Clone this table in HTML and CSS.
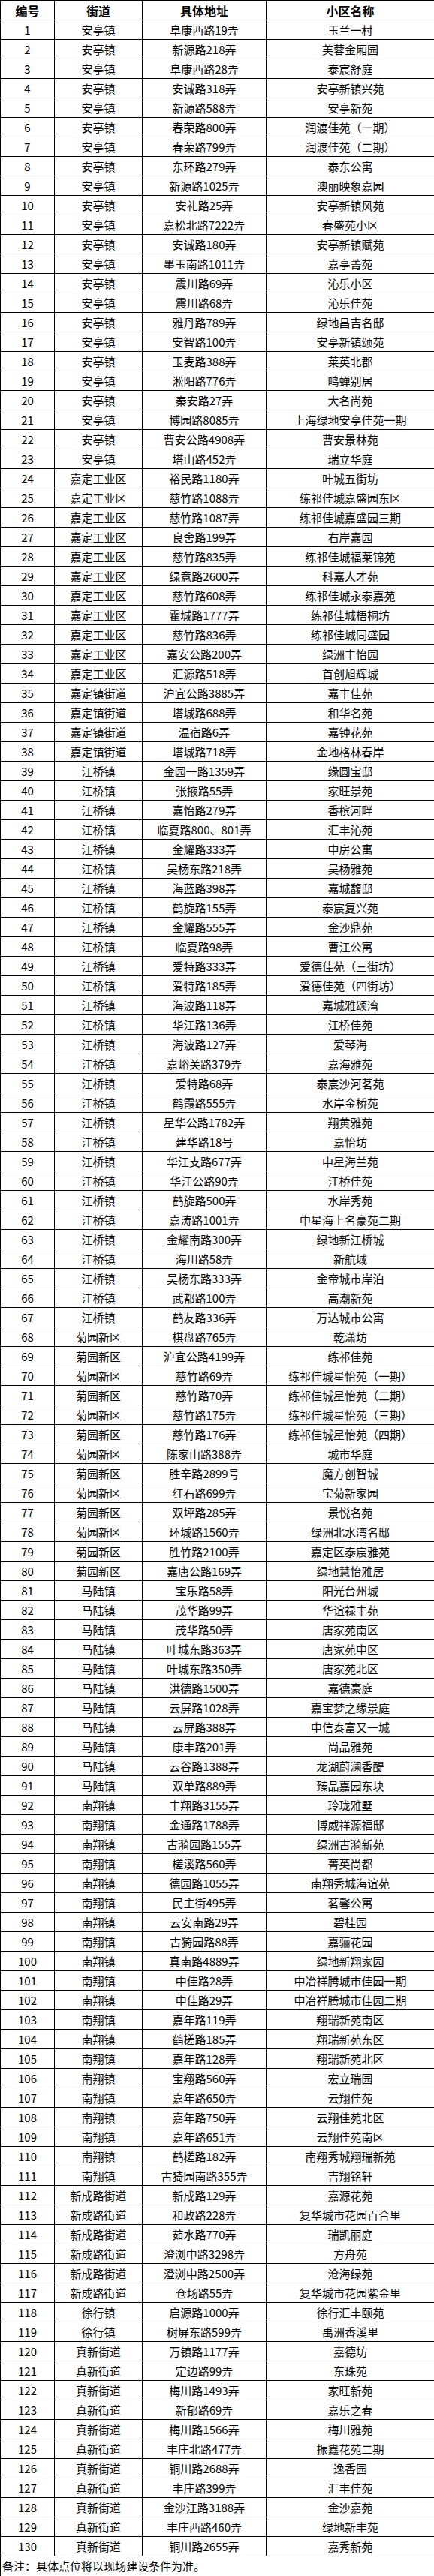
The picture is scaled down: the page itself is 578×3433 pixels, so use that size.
FILE: index.html
```html
<!DOCTYPE html>
<html lang="zh-CN">
<head>
<meta charset="utf-8">
<title>小区名单</title>
<link rel="stylesheet" href="styles.css">
</head>
<body>
<table class="list">
<colgroup><col class="c-no"><col class="c-street"><col class="c-addr"><col class="c-name"></colgroup>
<thead>
<tr class="head"><th>编号</th><th>街道</th><th>具体地址</th><th>小区名称</th></tr>
</thead>
<tbody>
<tr><td>1</td><td>安亭镇</td><td>阜康西路19弄</td><td>玉兰一村</td></tr>
<tr><td>2</td><td>安亭镇</td><td>新源路218弄</td><td>芙蓉金厢园</td></tr>
<tr><td>3</td><td>安亭镇</td><td>阜康西路28弄</td><td>泰宸舒庭</td></tr>
<tr><td>4</td><td>安亭镇</td><td>安诚路318弄</td><td>安亭新镇兴苑</td></tr>
<tr><td>5</td><td>安亭镇</td><td>新源路588弄</td><td>安亭新苑</td></tr>
<tr><td>6</td><td>安亭镇</td><td>春荣路800弄</td><td>润渡佳苑（一期）</td></tr>
<tr><td>7</td><td>安亭镇</td><td>春荣路799弄</td><td>润渡佳苑（二期）</td></tr>
<tr><td>8</td><td>安亭镇</td><td>东环路279弄</td><td>泰东公寓</td></tr>
<tr><td>9</td><td>安亭镇</td><td>新源路1025弄</td><td>澳丽映象嘉园</td></tr>
<tr><td>10</td><td>安亭镇</td><td>安礼路25弄</td><td>安亭新镇风苑</td></tr>
<tr><td>11</td><td>安亭镇</td><td>嘉松北路7222弄</td><td>春盛苑小区</td></tr>
<tr><td>12</td><td>安亭镇</td><td>安诚路180弄</td><td>安亭新镇赋苑</td></tr>
<tr><td>13</td><td>安亭镇</td><td>墨玉南路1011弄</td><td>嘉亭菁苑</td></tr>
<tr><td>14</td><td>安亭镇</td><td>震川路69弄</td><td>沁乐小区</td></tr>
<tr><td>15</td><td>安亭镇</td><td>震川路68弄</td><td>沁乐佳苑</td></tr>
<tr><td>16</td><td>安亭镇</td><td>雅丹路789弄</td><td>绿地昌吉名邸</td></tr>
<tr><td>17</td><td>安亭镇</td><td>安智路100弄</td><td>安亭新镇颂苑</td></tr>
<tr><td>18</td><td>安亭镇</td><td>玉麦路388弄</td><td>莱英北郡</td></tr>
<tr><td>19</td><td>安亭镇</td><td>淞阳路776弄</td><td>鸣蝉别居</td></tr>
<tr><td>20</td><td>安亭镇</td><td>秦安路27弄</td><td>大名尚苑</td></tr>
<tr><td>21</td><td>安亭镇</td><td>博园路8085弄</td><td>上海绿地安亭佳苑一期</td></tr>
<tr><td>22</td><td>安亭镇</td><td>曹安公路4908弄</td><td>曹安景林苑</td></tr>
<tr><td>23</td><td>安亭镇</td><td>塔山路452弄</td><td>瑞立华庭</td></tr>
<tr><td>24</td><td>嘉定工业区</td><td>裕民路1180弄</td><td>叶城五街坊</td></tr>
<tr><td>25</td><td>嘉定工业区</td><td>慈竹路1088弄</td><td>练祁佳城嘉盛园东区</td></tr>
<tr><td>26</td><td>嘉定工业区</td><td>慈竹路1087弄</td><td>练祁佳城嘉盛园三期</td></tr>
<tr><td>27</td><td>嘉定工业区</td><td>良舍路199弄</td><td>右岸嘉园</td></tr>
<tr><td>28</td><td>嘉定工业区</td><td>慈竹路835弄</td><td>练祁佳城福莱锦苑</td></tr>
<tr><td>29</td><td>嘉定工业区</td><td>绿意路2600弄</td><td>科嘉人才苑</td></tr>
<tr><td>30</td><td>嘉定工业区</td><td>慈竹路608弄</td><td>练祁佳城永泰嘉苑</td></tr>
<tr><td>31</td><td>嘉定工业区</td><td>霍城路1777弄</td><td>练祁佳城梧桐坊</td></tr>
<tr><td>32</td><td>嘉定工业区</td><td>慈竹路836弄</td><td>练祁佳城同盛园</td></tr>
<tr><td>33</td><td>嘉定工业区</td><td>嘉安公路200弄</td><td>绿洲丰怡园</td></tr>
<tr><td>34</td><td>嘉定工业区</td><td>汇源路518弄</td><td>首创旭辉城</td></tr>
<tr><td>35</td><td>嘉定镇街道</td><td>沪宜公路3885弄</td><td>嘉丰佳苑</td></tr>
<tr><td>36</td><td>嘉定镇街道</td><td>塔城路688弄</td><td>和华名苑</td></tr>
<tr><td>37</td><td>嘉定镇街道</td><td>温宿路6弄</td><td>嘉钟花苑</td></tr>
<tr><td>38</td><td>嘉定镇街道</td><td>塔城路718弄</td><td>金地格林春岸</td></tr>
<tr><td>39</td><td>江桥镇</td><td>金园一路1359弄</td><td>缘圆宝邸</td></tr>
<tr><td>40</td><td>江桥镇</td><td>张掖路55弄</td><td>家旺景苑</td></tr>
<tr><td>41</td><td>江桥镇</td><td>嘉怡路279弄</td><td>香槟河畔</td></tr>
<tr><td>42</td><td>江桥镇</td><td>临夏路800、801弄</td><td>汇丰沁苑</td></tr>
<tr><td>43</td><td>江桥镇</td><td>金耀路333弄</td><td>中房公寓</td></tr>
<tr><td>44</td><td>江桥镇</td><td>吴杨东路218弄</td><td>吴杨雅苑</td></tr>
<tr><td>45</td><td>江桥镇</td><td>海蓝路398弄</td><td>嘉城馥邸</td></tr>
<tr><td>46</td><td>江桥镇</td><td>鹤旋路155弄</td><td>泰宸复兴苑</td></tr>
<tr><td>47</td><td>江桥镇</td><td>金耀路555弄</td><td>金沙鼎苑</td></tr>
<tr><td>48</td><td>江桥镇</td><td>临夏路98弄</td><td>曹江公寓</td></tr>
<tr><td>49</td><td>江桥镇</td><td>爱特路333弄</td><td>爱德佳苑（三街坊）</td></tr>
<tr><td>50</td><td>江桥镇</td><td>爱特路185弄</td><td>爱德佳苑（四街坊）</td></tr>
<tr><td>51</td><td>江桥镇</td><td>海波路118弄</td><td>嘉城雅颂湾</td></tr>
<tr><td>52</td><td>江桥镇</td><td>华江路136弄</td><td>江桥佳苑</td></tr>
<tr><td>53</td><td>江桥镇</td><td>海波路127弄</td><td>爱琴海</td></tr>
<tr><td>54</td><td>江桥镇</td><td>嘉峪关路379弄</td><td>嘉海雅苑</td></tr>
<tr><td>55</td><td>江桥镇</td><td>爱特路68弄</td><td>泰宸沙河茗苑</td></tr>
<tr><td>56</td><td>江桥镇</td><td>鹤霞路555弄</td><td>水岸金桥苑</td></tr>
<tr><td>57</td><td>江桥镇</td><td>星华公路1782弄</td><td>翔黄雅苑</td></tr>
<tr><td>58</td><td>江桥镇</td><td>建华路18号</td><td>嘉怡坊</td></tr>
<tr><td>59</td><td>江桥镇</td><td>华江支路677弄</td><td>中星海兰苑</td></tr>
<tr><td>60</td><td>江桥镇</td><td>华江公路90弄</td><td>江桥佳苑</td></tr>
<tr><td>61</td><td>江桥镇</td><td>鹤旋路500弄</td><td>水岸秀苑</td></tr>
<tr><td>62</td><td>江桥镇</td><td>嘉涛路1001弄</td><td>中星海上名豪苑二期</td></tr>
<tr><td>63</td><td>江桥镇</td><td>金耀南路300弄</td><td>绿地新江桥城</td></tr>
<tr><td>64</td><td>江桥镇</td><td>海川路58弄</td><td>新航域</td></tr>
<tr><td>65</td><td>江桥镇</td><td>吴杨东路333弄</td><td>金帝城市岸泊</td></tr>
<tr><td>66</td><td>江桥镇</td><td>武都路100弄</td><td>高潮新苑</td></tr>
<tr><td>67</td><td>江桥镇</td><td>鹤友路336弄</td><td>万达城市公寓</td></tr>
<tr><td>68</td><td>菊园新区</td><td>棋盘路765弄</td><td>乾潇坊</td></tr>
<tr><td>69</td><td>菊园新区</td><td>沪宜公路4199弄</td><td>练祁佳苑</td></tr>
<tr><td>70</td><td>菊园新区</td><td>慈竹路69弄</td><td>练祁佳城星怡苑（一期）</td></tr>
<tr><td>71</td><td>菊园新区</td><td>慈竹路70弄</td><td>练祁佳城星怡苑（二期）</td></tr>
<tr><td>72</td><td>菊园新区</td><td>慈竹路175弄</td><td>练祁佳城星怡苑（三期）</td></tr>
<tr><td>73</td><td>菊园新区</td><td>慈竹路176弄</td><td>练祁佳城星怡苑（四期）</td></tr>
<tr><td>74</td><td>菊园新区</td><td>陈家山路388弄</td><td>城市华庭</td></tr>
<tr><td>75</td><td>菊园新区</td><td>胜辛路2899号</td><td>魔方创智城</td></tr>
<tr><td>76</td><td>菊园新区</td><td>红石路699弄</td><td>宝菊新家园</td></tr>
<tr><td>77</td><td>菊园新区</td><td>双坪路285弄</td><td>景悦名苑</td></tr>
<tr><td>78</td><td>菊园新区</td><td>环城路1560弄</td><td>绿洲北水湾名邸</td></tr>
<tr><td>79</td><td>菊园新区</td><td>胜竹路2100弄</td><td>嘉定区泰宸雅苑</td></tr>
<tr><td>80</td><td>菊园新区</td><td>嘉唐公路169弄</td><td>绿地慧怡雅居</td></tr>
<tr><td>81</td><td>马陆镇</td><td>宝乐路58弄</td><td>阳光台州城</td></tr>
<tr><td>82</td><td>马陆镇</td><td>茂华路99弄</td><td>华谊禄丰苑</td></tr>
<tr><td>83</td><td>马陆镇</td><td>茂华路50弄</td><td>唐家苑南区</td></tr>
<tr><td>84</td><td>马陆镇</td><td>叶城东路363弄</td><td>唐家苑中区</td></tr>
<tr><td>85</td><td>马陆镇</td><td>叶城东路350弄</td><td>唐家苑北区</td></tr>
<tr><td>86</td><td>马陆镇</td><td>洪德路1500弄</td><td>嘉德豪庭</td></tr>
<tr><td>87</td><td>马陆镇</td><td>云屏路1028弄</td><td>嘉宝梦之缘景庭</td></tr>
<tr><td>88</td><td>马陆镇</td><td>云屏路388弄</td><td>中信泰富又一城</td></tr>
<tr><td>89</td><td>马陆镇</td><td>康丰路201弄</td><td>尚品雅苑</td></tr>
<tr><td>90</td><td>马陆镇</td><td>云谷路1388弄</td><td>龙湖蔚澜香醍</td></tr>
<tr><td>91</td><td>马陆镇</td><td>双单路889弄</td><td>臻品嘉园东块</td></tr>
<tr><td>92</td><td>南翔镇</td><td>丰翔路3155弄</td><td>玲珑雅墅</td></tr>
<tr><td>93</td><td>南翔镇</td><td>金通路1788弄</td><td>博威祥源福邸</td></tr>
<tr><td>94</td><td>南翔镇</td><td>古漪园路155弄</td><td>绿洲古漪新苑</td></tr>
<tr><td>95</td><td>南翔镇</td><td>槎溪路560弄</td><td>菁英尚都</td></tr>
<tr><td>96</td><td>南翔镇</td><td>德园路1055弄</td><td>南翔秀城海谊苑</td></tr>
<tr><td>97</td><td>南翔镇</td><td>民主街495弄</td><td>茗馨公寓</td></tr>
<tr><td>98</td><td>南翔镇</td><td>云安南路29弄</td><td>碧桂园</td></tr>
<tr><td>99</td><td>南翔镇</td><td>古猗园路88弄</td><td>嘉骊花园</td></tr>
<tr><td>100</td><td>南翔镇</td><td>真南路4889弄</td><td>绿地新翔家园</td></tr>
<tr><td>101</td><td>南翔镇</td><td>中佳路28弄</td><td>中冶祥腾城市佳园一期</td></tr>
<tr><td>102</td><td>南翔镇</td><td>中佳路29弄</td><td>中冶祥腾城市佳园二期</td></tr>
<tr><td>103</td><td>南翔镇</td><td>嘉年路119弄</td><td>翔瑞新苑南区</td></tr>
<tr><td>104</td><td>南翔镇</td><td>鹤槎路185弄</td><td>翔瑞新苑东区</td></tr>
<tr><td>105</td><td>南翔镇</td><td>嘉年路128弄</td><td>翔瑞新苑北区</td></tr>
<tr><td>106</td><td>南翔镇</td><td>宝翔路560弄</td><td>宏立瑞园</td></tr>
<tr><td>107</td><td>南翔镇</td><td>嘉年路650弄</td><td>云翔佳苑</td></tr>
<tr><td>108</td><td>南翔镇</td><td>嘉年路750弄</td><td>云翔佳苑北区</td></tr>
<tr><td>109</td><td>南翔镇</td><td>嘉年路651弄</td><td>云翔佳苑南区</td></tr>
<tr><td>110</td><td>南翔镇</td><td>鹤槎路182弄</td><td>南翔秀城翔瑞新苑</td></tr>
<tr><td>111</td><td>南翔镇</td><td>古猗园南路355弄</td><td>吉翔铭轩</td></tr>
<tr><td>112</td><td>新成路街道</td><td>新成路129弄</td><td>嘉源花苑</td></tr>
<tr><td>113</td><td>新成路街道</td><td>和政路228弄</td><td>复华城市花园百合里</td></tr>
<tr><td>114</td><td>新成路街道</td><td>茹水路770弄</td><td>瑞凯丽庭</td></tr>
<tr><td>115</td><td>新成路街道</td><td>澄浏中路3298弄</td><td>方舟苑</td></tr>
<tr><td>116</td><td>新成路街道</td><td>澄浏中路2500弄</td><td>沧海绿苑</td></tr>
<tr><td>117</td><td>新成路街道</td><td>仓场路55弄</td><td>复华城市花园紫金里</td></tr>
<tr><td>118</td><td>徐行镇</td><td>启源路1000弄</td><td>徐行汇丰颐苑</td></tr>
<tr><td>119</td><td>徐行镇</td><td>树屏东路599弄</td><td>禹洲香溪里</td></tr>
<tr><td>120</td><td>真新街道</td><td>万镇路1177弄</td><td>嘉德坊</td></tr>
<tr><td>121</td><td>真新街道</td><td>定边路99弄</td><td>东珠苑</td></tr>
<tr><td>122</td><td>真新街道</td><td>梅川路1493弄</td><td>家旺新苑</td></tr>
<tr><td>123</td><td>真新街道</td><td>新郁路69弄</td><td>嘉乐之春</td></tr>
<tr><td>124</td><td>真新街道</td><td>梅川路1566弄</td><td>梅川雅苑</td></tr>
<tr><td>125</td><td>真新街道</td><td>丰庄北路477弄</td><td>振鑫花苑二期</td></tr>
<tr><td>126</td><td>真新街道</td><td>铜川路2688弄</td><td>逸香园</td></tr>
<tr><td>127</td><td>真新街道</td><td>丰庄路399弄</td><td>汇丰佳苑</td></tr>
<tr><td>128</td><td>真新街道</td><td>金沙江路3188弄</td><td>金沙嘉苑</td></tr>
<tr><td>129</td><td>真新街道</td><td>丰庄西路460弄</td><td>绿地新丰苑</td></tr>
<tr><td>130</td><td>真新街道</td><td>铜川路2655弄</td><td>嘉秀新苑</td></tr>
<tr class="note"><td colspan="4">备注：具体点位将以现场建设条件为准。</td></tr>
</tbody>
</table>
</body>
</html>
```

FILE: styles.css
```css
html, body {
  margin: 0;
  padding: 0;
  background: #ffffff;
}

body {
  font-family: "Noto Sans CJK SC", "Liberation Sans", sans-serif;
  color: #000000;
}

.list {
  width: 578px;
  border-collapse: collapse;
  table-layout: fixed;
}

.c-no { width: 72px; }
.c-street { width: 117px; }
.c-addr { width: 165px; }
.c-name { width: 224px; }

.list th,
.list td {
  border: 1px solid #000000;
  padding: 0;
  height: 25px;
  font-size: 15px;
  line-height: 18px;
  text-align: center;
  vertical-align: middle;
  white-space: nowrap;
  overflow: hidden;
  font-weight: 400;
}

.list tr {
  height: 26px;
}

.list .head th {
  font-weight: 700;
  font-size: 16px;
}

.list .note td {
  height: 26px;
  text-align: left;
  padding-left: 2px;
}
```
